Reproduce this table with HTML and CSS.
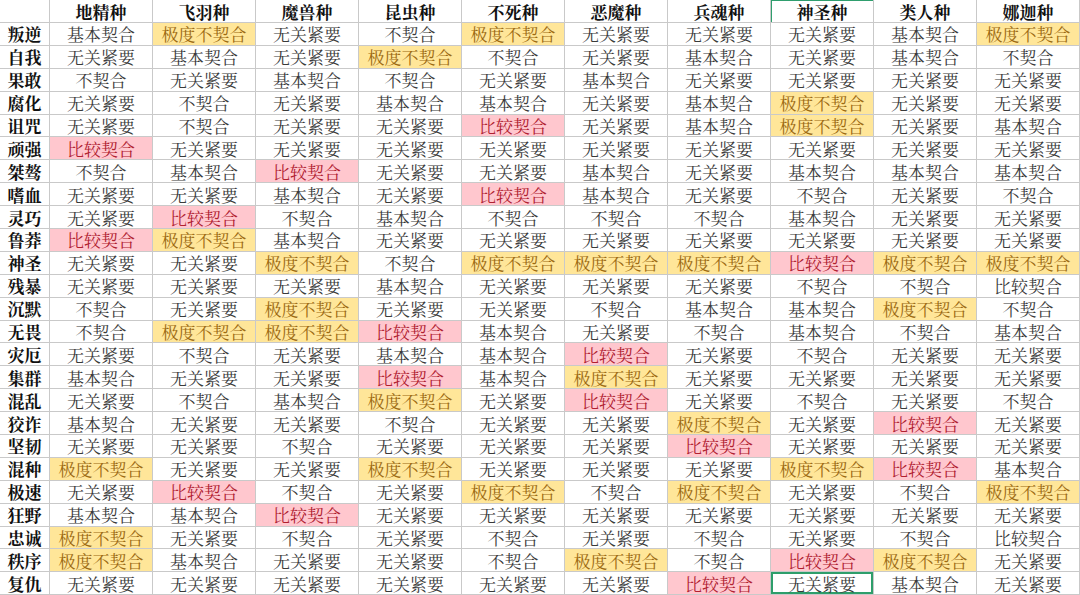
FILE: index.html
```html
<!DOCTYPE html>
<html lang="zh">
<head>
<meta charset="utf-8">
<link rel="stylesheet" href="styles.css">
</head>
<body>
<div class="sheet">
<div class="k corner"></div><div class="k">地精种</div><div class="k">飞羽种</div><div class="k">魔兽种</div><div class="k">昆虫种</div><div class="k">不死种</div><div class="k">恶魔种</div><div class="k">兵魂种</div><div class="k sel">神圣种</div><div class="k">类人种</div><div class="k">娜迦种</div>

<div class="h">叛逆</div><div class="c">基本契合</div><div class="c y">极度不契合</div><div class="c">无关紧要</div><div class="c">不契合</div><div class="c y">极度不契合</div><div class="c">无关紧要</div><div class="c">无关紧要</div><div class="c">无关紧要</div><div class="c">基本契合</div><div class="c y">极度不契合</div>
<div class="h">自我</div><div class="c">无关紧要</div><div class="c">基本契合</div><div class="c">无关紧要</div><div class="c y">极度不契合</div><div class="c">不契合</div><div class="c">无关紧要</div><div class="c">基本契合</div><div class="c">无关紧要</div><div class="c">基本契合</div><div class="c">不契合</div>
<div class="h">果敢</div><div class="c">不契合</div><div class="c">无关紧要</div><div class="c">基本契合</div><div class="c">不契合</div><div class="c">无关紧要</div><div class="c">基本契合</div><div class="c">无关紧要</div><div class="c">无关紧要</div><div class="c">无关紧要</div><div class="c">无关紧要</div>
<div class="h">腐化</div><div class="c">无关紧要</div><div class="c">不契合</div><div class="c">无关紧要</div><div class="c">基本契合</div><div class="c">基本契合</div><div class="c">无关紧要</div><div class="c">基本契合</div><div class="c y">极度不契合</div><div class="c">无关紧要</div><div class="c">无关紧要</div>
<div class="h">诅咒</div><div class="c">无关紧要</div><div class="c">不契合</div><div class="c">无关紧要</div><div class="c">无关紧要</div><div class="c p">比较契合</div><div class="c">无关紧要</div><div class="c">基本契合</div><div class="c y">极度不契合</div><div class="c">无关紧要</div><div class="c">基本契合</div>
<div class="h">顽强</div><div class="c p">比较契合</div><div class="c">无关紧要</div><div class="c">无关紧要</div><div class="c">无关紧要</div><div class="c">无关紧要</div><div class="c">无关紧要</div><div class="c">无关紧要</div><div class="c">无关紧要</div><div class="c">无关紧要</div><div class="c">无关紧要</div>
<div class="h">桀骜</div><div class="c">不契合</div><div class="c">基本契合</div><div class="c p">比较契合</div><div class="c">无关紧要</div><div class="c">无关紧要</div><div class="c">基本契合</div><div class="c">无关紧要</div><div class="c">基本契合</div><div class="c">基本契合</div><div class="c">基本契合</div>
<div class="h">嗜血</div><div class="c">无关紧要</div><div class="c">无关紧要</div><div class="c">基本契合</div><div class="c">无关紧要</div><div class="c p">比较契合</div><div class="c">基本契合</div><div class="c">无关紧要</div><div class="c">不契合</div><div class="c">无关紧要</div><div class="c">不契合</div>
<div class="h">灵巧</div><div class="c">无关紧要</div><div class="c p">比较契合</div><div class="c">不契合</div><div class="c">基本契合</div><div class="c">不契合</div><div class="c">不契合</div><div class="c">不契合</div><div class="c">基本契合</div><div class="c">无关紧要</div><div class="c">无关紧要</div>
<div class="h">鲁莽</div><div class="c p">比较契合</div><div class="c y">极度不契合</div><div class="c">基本契合</div><div class="c">无关紧要</div><div class="c">无关紧要</div><div class="c">无关紧要</div><div class="c">无关紧要</div><div class="c">无关紧要</div><div class="c">无关紧要</div><div class="c">无关紧要</div>
<div class="h">神圣</div><div class="c">无关紧要</div><div class="c">无关紧要</div><div class="c y">极度不契合</div><div class="c">不契合</div><div class="c y">极度不契合</div><div class="c y">极度不契合</div><div class="c y">极度不契合</div><div class="c p">比较契合</div><div class="c y">极度不契合</div><div class="c y">极度不契合</div>
<div class="h">残暴</div><div class="c">无关紧要</div><div class="c">无关紧要</div><div class="c">无关紧要</div><div class="c">基本契合</div><div class="c">无关紧要</div><div class="c">无关紧要</div><div class="c">无关紧要</div><div class="c">不契合</div><div class="c">不契合</div><div class="c">比较契合</div>
<div class="h">沉默</div><div class="c">不契合</div><div class="c">无关紧要</div><div class="c y">极度不契合</div><div class="c">无关紧要</div><div class="c">无关紧要</div><div class="c">不契合</div><div class="c">基本契合</div><div class="c">基本契合</div><div class="c y">极度不契合</div><div class="c">不契合</div>
<div class="h">无畏</div><div class="c">不契合</div><div class="c y">极度不契合</div><div class="c y">极度不契合</div><div class="c p">比较契合</div><div class="c">基本契合</div><div class="c">无关紧要</div><div class="c">不契合</div><div class="c">基本契合</div><div class="c">不契合</div><div class="c">基本契合</div>
<div class="h">灾厄</div><div class="c">无关紧要</div><div class="c">不契合</div><div class="c">无关紧要</div><div class="c">基本契合</div><div class="c">基本契合</div><div class="c p">比较契合</div><div class="c">无关紧要</div><div class="c">不契合</div><div class="c">无关紧要</div><div class="c">无关紧要</div>
<div class="h">集群</div><div class="c">基本契合</div><div class="c">无关紧要</div><div class="c">无关紧要</div><div class="c p">比较契合</div><div class="c">基本契合</div><div class="c y">极度不契合</div><div class="c">无关紧要</div><div class="c">无关紧要</div><div class="c">无关紧要</div><div class="c">无关紧要</div>
<div class="h">混乱</div><div class="c">无关紧要</div><div class="c">不契合</div><div class="c">基本契合</div><div class="c y">极度不契合</div><div class="c">无关紧要</div><div class="c p">比较契合</div><div class="c">无关紧要</div><div class="c">不契合</div><div class="c">无关紧要</div><div class="c">不契合</div>
<div class="h">狡诈</div><div class="c">基本契合</div><div class="c">无关紧要</div><div class="c">无关紧要</div><div class="c">不契合</div><div class="c">无关紧要</div><div class="c">无关紧要</div><div class="c y">极度不契合</div><div class="c">无关紧要</div><div class="c p">比较契合</div><div class="c">无关紧要</div>
<div class="h">坚韧</div><div class="c">无关紧要</div><div class="c">无关紧要</div><div class="c">不契合</div><div class="c">无关紧要</div><div class="c">无关紧要</div><div class="c">无关紧要</div><div class="c p">比较契合</div><div class="c">无关紧要</div><div class="c">无关紧要</div><div class="c">无关紧要</div>
<div class="h">混种</div><div class="c y">极度不契合</div><div class="c">无关紧要</div><div class="c">无关紧要</div><div class="c y">极度不契合</div><div class="c">无关紧要</div><div class="c">无关紧要</div><div class="c">无关紧要</div><div class="c y">极度不契合</div><div class="c p">比较契合</div><div class="c">基本契合</div>
<div class="h">极速</div><div class="c">无关紧要</div><div class="c p">比较契合</div><div class="c">不契合</div><div class="c">无关紧要</div><div class="c y">极度不契合</div><div class="c">不契合</div><div class="c y">极度不契合</div><div class="c">无关紧要</div><div class="c">不契合</div><div class="c y">极度不契合</div>
<div class="h">狂野</div><div class="c">基本契合</div><div class="c">基本契合</div><div class="c p">比较契合</div><div class="c">无关紧要</div><div class="c">无关紧要</div><div class="c">无关紧要</div><div class="c">无关紧要</div><div class="c">无关紧要</div><div class="c">无关紧要</div><div class="c">无关紧要</div>
<div class="h">忠诚</div><div class="c y">极度不契合</div><div class="c">无关紧要</div><div class="c">不契合</div><div class="c">无关紧要</div><div class="c">不契合</div><div class="c">无关紧要</div><div class="c">不契合</div><div class="c">无关紧要</div><div class="c">不契合</div><div class="c">比较契合</div>
<div class="h">秩序</div><div class="c y">极度不契合</div><div class="c">基本契合</div><div class="c">无关紧要</div><div class="c">无关紧要</div><div class="c">不契合</div><div class="c y">极度不契合</div><div class="c">不契合</div><div class="c p">比较契合</div><div class="c y">极度不契合</div><div class="c">无关紧要</div>
<div class="h">复仇</div><div class="c">无关紧要</div><div class="c">无关紧要</div><div class="c">无关紧要</div><div class="c">无关紧要</div><div class="c">无关紧要</div><div class="c">无关紧要</div><div class="c p">比较契合</div><div class="c active">无关紧要</div><div class="c">基本契合</div><div class="c">无关紧要</div>
</div>
</body>
</html>
```

FILE: styles.css
```css
html, body {
  margin: 0;
  padding: 0;
  background: #ffffff;
}

body {
  width: 1080px;
  height: 595px;
  overflow: hidden;
  font-family: "Noto Serif CJK SC", "Noto Sans CJK SC", serif;
}

.sheet {
  display: grid;
  grid-template-columns: 50px repeat(10, 1fr);
  grid-template-rows: 23px;
  grid-auto-rows: 22.9px;
  width: 1080px;
}

.sheet > div {
  box-sizing: border-box;
  border-right: 1px solid #c9c9c9;
  border-bottom: 1px solid #c9c9c9;
  display: flex;
  align-items: center;
  justify-content: center;
  white-space: nowrap;
  line-height: 1;
}

.k {
  font-size: 17px;
  font-weight: 700;
  color: #111111;
}

.k.sel {
  box-shadow: inset 1px 0 0 #2f9e6e, inset 0 1px 0 #2f9e6e;
}

.h {
  font-size: 17px;
  font-weight: 700;
  color: #111111;
}

.c {
  font-size: 17px;
  font-weight: 400;
  color: #3a3a3a;
}

.c.y {
  background: #ffe699;
  color: #9c6a12;
}

.c.p {
  background: #ffc7ce;
  color: #b02030;
}

.c.active {
  box-shadow: inset 0 0 0 2px #2e9e6b;
}
```
